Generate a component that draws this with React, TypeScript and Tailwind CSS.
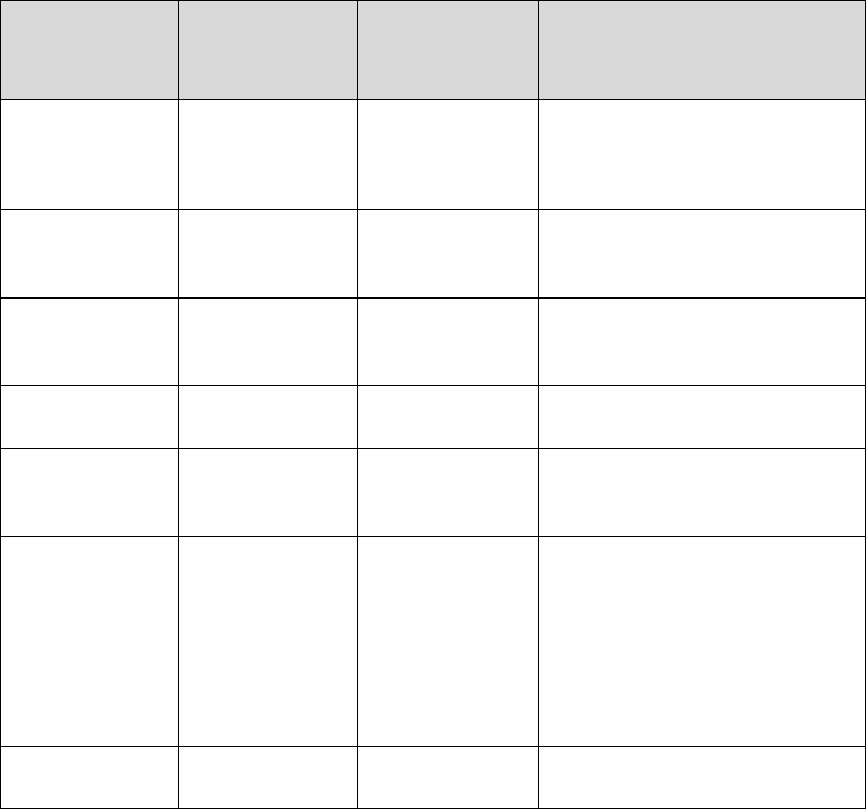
const rows = [
  { h: 'h-[99px]', header: true },
  { h: 'h-[110px]' },
  { h: 'h-[89px]', thick: true },
  { h: 'h-[87px]' },
  { h: 'h-[63px]' },
  { h: 'h-[88px]' },
  { h: 'h-[210px]' },
  { h: 'h-[62px]' },
];

export default function App() {
  return (
    <div className="w-[866px] h-[810px] bg-white font-['Liberation_Sans',sans-serif]">
      <div className="grid grid-cols-[178px_179px_181px_327px] border-l border-t border-black">
        {rows.map((row, i) =>
          [0, 1, 2, 3].map((c) => (
            <div
              key={`${i}-${c}`}
              className={`${row.h} border-r border-black ${row.thick ? 'border-b-2' : 'border-b'} ${
                row.header ? 'bg-[#d9d9d9]' : 'bg-white'
              }`}
            />
          ))
        )}
      </div>
    </div>
  );
}
